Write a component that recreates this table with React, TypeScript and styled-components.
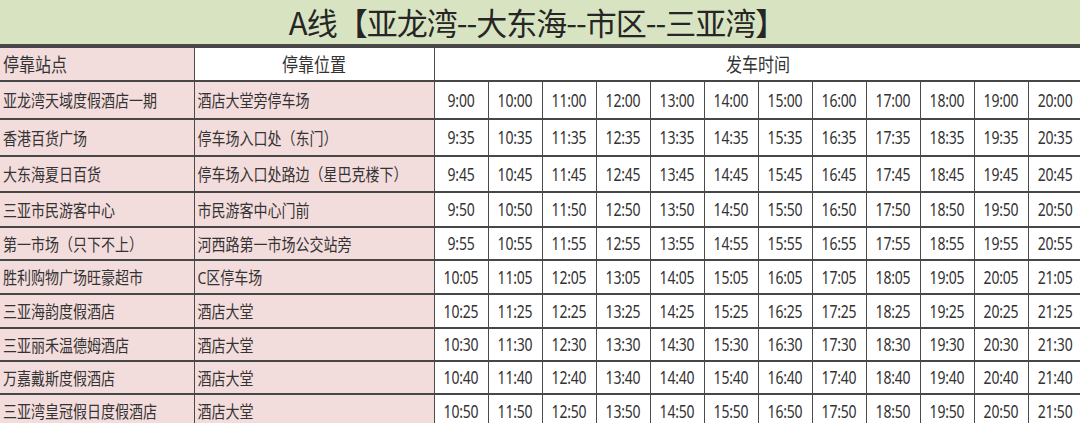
import { type FC } from "react";
import styled, { createGlobalStyle } from "styled-components";

const GlobalStyle = createGlobalStyle`
  html, body {
    margin: 0;
    padding: 0;
    background: #ffffff;
  }
  body {
    font-family: "Noto Sans", "Noto Sans CJK SC", sans-serif;
    color: #333;
  }
`;

const Page = styled.div`
  width: 1080px;
  height: 423px;
  overflow: hidden;
  background: #ffffff;
`;

const TitleBar = styled.div`
  display: flex;
  justify-content: center;
  align-items: center;
  height: 46px;
  box-sizing: border-box;
  background: #d8e4c1;
  border-bottom: 2px solid #4a4a4a;
`;

const Title = styled.h1`
  margin: 0 0 0 -6px;
  font-family: "Noto Sans CJK SC", sans-serif;
  font-weight: 400;
  font-size: 31px;
  line-height: 44px;
  letter-spacing: -1px;
  color: #262626;
`;

const Table = styled.table`
  width: 1082px;
  table-layout: fixed;
  border-collapse: collapse;
  font-family: "Noto Sans", "Noto Sans CJK SC", sans-serif;
`;

const Row = styled.tr<{ $h: number }>`
  height: ${(p) => p.$h}px;
`;

const Cell = styled.td<{ $tone?: "pink" | "white"; $align?: "left" | "center" }>`
  padding: 0 3px;
  background: ${(p) => (p.$tone === "pink" ? "#f3dcdc" : "#ffffff")};
  text-align: ${(p) => p.$align ?? "left"};
  border-top: 2px solid #474747;
  border-bottom: 2px solid #474747;
  border-left: 1px solid #4a4a4a;
  border-right: 1px solid #4a4a4a;
  white-space: nowrap;
  overflow: hidden;
  vertical-align: middle;
  font-size: 14px;
  color: #333;

  &:first-child {
    border-left: none;
  }
`;

const HeadCell = styled(Cell)`
  font-size: 16px;
`;

const Txt = styled.span`
  display: inline-block;
  transform: scaleY(1.2);
`;

const TimeTxt = styled(Txt)`
  font-size: 14px;
  letter-spacing: -0.2px;
  transform: scaleY(1.25);
`;

type Stop = {
  name: string;
  place: string;
  minute: string;
  start: number;
};

const stops: Stop[] = [
  { name: "亚龙湾天域度假酒店一期", place: "酒店大堂旁停车场", minute: "00", start: 9 },
  { name: "香港百货广场", place: "停车场入口处（东门）", minute: "35", start: 9 },
  { name: "大东海夏日百货", place: "停车场入口处路边（星巴克楼下）", minute: "45", start: 9 },
  { name: "三亚市民游客中心", place: "市民游客中心门前", minute: "50", start: 9 },
  { name: "第一市场（只下不上）", place: "河西路第一市场公交站旁", minute: "55", start: 9 },
  { name: "胜利购物广场旺豪超市", place: "C区停车场", minute: "05", start: 10 },
  { name: "三亚海韵度假酒店", place: "酒店大堂", minute: "25", start: 10 },
  { name: "三亚丽禾温德姆酒店", place: "酒店大堂", minute: "30", start: 10 },
  { name: "万嘉戴斯度假酒店", place: "酒店大堂", minute: "40", start: 10 },
  { name: "三亚湾皇冠假日度假酒店", place: "酒店大堂", minute: "50", start: 10 },
];

// the photo is slightly skewed, rows get a bit shorter further down
const rowHeights = [38, 37, 36, 35, 33, 34, 34, 33, 33, 34];

const App: FC = () => {
  return (
    <Page>
      <GlobalStyle />
      <TitleBar>
        <Title>A线【亚龙湾--大东海--市区--三亚湾】</Title>
      </TitleBar>
      <Table>
        <colgroup>
          <col style={{ width: 194 }} />
          <col style={{ width: 240 }} />
          {Array.from({ length: 12 }, (_, i) => (
            <col key={i} style={{ width: 54 }} />
          ))}
        </colgroup>
        <tbody>
          <Row $h={34}>
            <HeadCell $tone="pink">
              <Txt>停靠站点</Txt>
            </HeadCell>
            <HeadCell $align="center">
              <Txt>停靠位置</Txt>
            </HeadCell>
            <HeadCell $align="center" colSpan={12}>
              <Txt>发车时间</Txt>
            </HeadCell>
          </Row>
          {stops.map((stop, r) => (
            <Row $h={rowHeights[r]} key={stop.name}>
              <Cell $tone="pink">
                <Txt>{stop.name}</Txt>
              </Cell>
              <Cell $tone="pink">
                <Txt>{stop.place}</Txt>
              </Cell>
              {Array.from({ length: 12 }, (_, i) => (
                <Cell $align="center" key={i}>
                  <TimeTxt>
                    {stop.start + i}:{stop.minute}
                  </TimeTxt>
                </Cell>
              ))}
            </Row>
          ))}
        </tbody>
      </Table>
    </Page>
  );
};

export default App;
